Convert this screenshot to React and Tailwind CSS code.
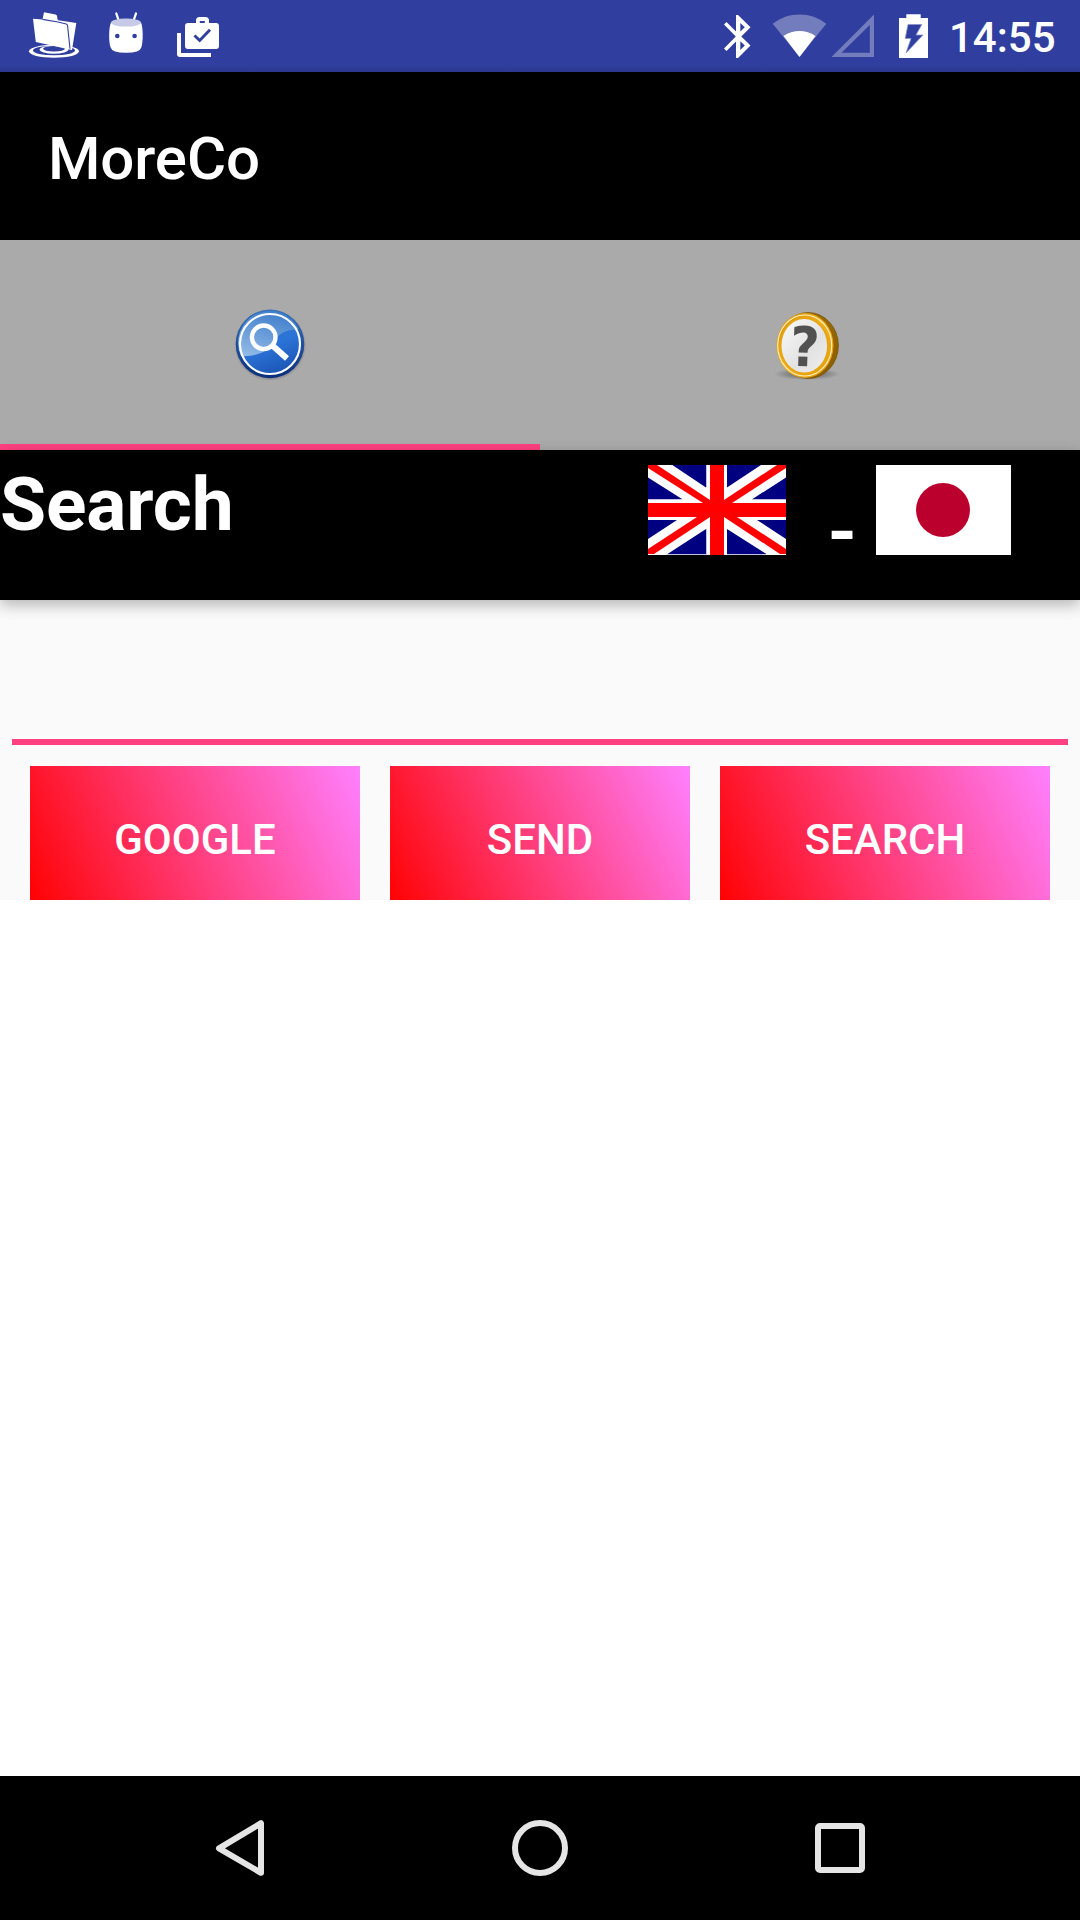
function NotificationIcons() {
  return (
    <svg className="h-[72px] w-[260px] shrink-0" viewBox="0 0 260 72" fill="#fff" aria-hidden="true">
      <ellipse cx="54" cy="51.3" rx="25" ry="6.5" />
      <ellipse cx="54" cy="50.5" rx="21" ry="4.8" fill="#303f9f" />
      <ellipse cx="54" cy="49.6" rx="14.5" ry="4.2" />
      <ellipse cx="54" cy="48.8" rx="11" ry="2.8" fill="#303f9f" />
      <path d="M33 18.8 L42.5 19.6 L44 12.2 L55.5 14.6 Q57.5 15.2 57.3 18.5 L58 20.2 L76.3 23 L72 50 L69.5 49.6 L35.8 42 Z" />
      <path d="M42.5 19.4 L58 22 L66.2 24 Q67.4 24.4 67.6 26 L70 48.8" fill="none" stroke="#303f9f" strokeWidth="1.1" />

      <path d="M116.3 13.5 L118.7 20.5 M136 13.5 L133.6 20.5" fill="none" stroke="#fff" strokeWidth="2.3" strokeLinecap="round" />
      <path d="M111 22.5 C108.7 27 108.6 42 110.5 47.2 Q112 52.7 126 52.7 Q140 52.7 141.4 47.2 C143.3 42 143.2 27 141 22.5 Z" />
      <ellipse cx="126" cy="22.6" rx="15" ry="4" fill="#c7cae6" />
      <circle cx="117.3" cy="36" r="2.3" fill="#303f9f" />
      <circle cx="134.6" cy="36" r="2.3" fill="#303f9f" />

      <path fillRule="evenodd" d="M188 23 H196 V20.5 Q196 17 199.5 17 H205.3 Q209 17 209 20.5 V23 H216 Q219 23 219 26 V46 Q219 49 216 49 H188 Q185 49 185 46 V26 Q185 23 188 23 Z M199.8 21 V23 H204.8 V21 Z" />
      <path d="M194.5 35.5 L199.7 40.5 L210 29.8" fill="none" stroke="#303f9f" strokeWidth="2.9" />
      <path d="M177 33 H181 V53 H211 V57 H180 Q177 57 177 54 Z" />
    </svg>
  );
}

function SystemIcons() {
  return (
    <svg className="h-[72px] w-[240px] shrink-0" viewBox="700 0 240 72" fill="#fff" aria-hidden="true">
      <path fillRule="evenodd" d="M736 15 H738 L750.5 27.200 L741.300 36.400 L750.500 45.600 L738 58 H736 V41.500 L726.500 51 L724 48.400 L735.800 36.400 L724 24.500 L726.500 22 L736 31.500 Z M740.300 23 V31.500 L744.800 27.200 Z M740.300 41.300 V50 L744.800 45.600 Z" />
      <path d="M799.5 57 L772.7 23.8 C788 11.3 811 11.3 826.3 23.8 Z" fill="#737cbd" />
      <path d="M799.5 57 L783.5 36 C793 29.3 806 29.3 815.5 36 Z" />
      <path fillRule="evenodd" d="M831.5 57 L874 14.5 V57 Z M841.5 52.7 H869.8 V25 Z" fill="#737cbd" />
      <path d="M899 18 H906.3 V14.3 H920.7 V18 H928 V58 H899 Z" />
      <path d="M908 24.5 H921.8 L916 35 H923 L906 53 L911 38.5 H905.2 Z" fill="#303f9f" stroke="#8b93ca" strokeWidth="0.8" />
    </svg>
  );
}

function StatusBar() {
  return (
    <header className="flex h-[72px] justify-between bg-linear-to-b from-[#303f9f] from-90% to-[#2b388e]">
      <NotificationIcons />
      <div className="flex">
        <SystemIcons />
        <span className="w-[140px] pt-[4px] pl-[9px] text-[42px] leading-[68px] font-medium text-white">14:55</span>
      </div>
    </header>
  );
}

function SearchIcon() {
  return (
    <svg className="h-[90px] w-[100px]" viewBox="0 0 100 90" aria-label="Search">
      <defs>
        <linearGradient id="discRim" x1="0" y1="0" x2="0" y2="1">
          <stop offset="0" stopColor="#3672bd" />
          <stop offset="1" stopColor="#0a2f7c" />
        </linearGradient>
        <linearGradient id="discFace" x1="0.2" y1="0" x2="0.6" y2="1">
          <stop offset="0" stopColor="#2f71c8" />
          <stop offset="0.55" stopColor="#2b74d6" />
          <stop offset="1" stopColor="#1c56b8" />
        </linearGradient>
        <linearGradient id="discShine" x1="0.6" y1="0" x2="0.2" y2="1">
          <stop offset="0" stopColor="#3f7ecb" />
          <stop offset="1" stopColor="#92b9e6" />
        </linearGradient>
        <radialGradient id="discShadow">
          <stop offset="0.85" stopColor="#444" stopOpacity="0.55" />
          <stop offset="1" stopColor="#444" stopOpacity="0" />
        </radialGradient>
      </defs>
      <circle cx="50.3" cy="45" r="36" fill="url(#discShadow)" />
      <circle cx="50" cy="43.9" r="34.3" fill="url(#discRim)" />
      <circle cx="50" cy="44" r="30" fill="url(#discFace)" />
      <path d="M21 56 C34 57 49 52 54 42 C58 33 68 29 79 29.5 A30 30 0 1 0 21 56 Z" fill="url(#discShine)" />
      <circle cx="50" cy="44" r="30" fill="none" stroke="#fff" strokeWidth="2.1" />
      <path d="M53 46 L67 58.5" stroke="#fff" strokeWidth="6" />
      <circle cx="43.7" cy="37.3" r="11.8" fill="none" stroke="#fff" strokeWidth="4.3" />
    </svg>
  );
}

function HelpIcon() {
  return (
    <svg className="h-[90px] w-[100px]" viewBox="0 0 100 90" aria-label="Help">
      <defs>
        <linearGradient id="coinEdge" x1="0" y1="0" x2="1" y2="1">
          <stop offset="0" stopColor="#a87307" />
          <stop offset="1" stopColor="#8a5c00" />
        </linearGradient>
        <linearGradient id="coinFace" x1="0" y1="0" x2="1" y2="1">
          <stop offset="0" stopColor="#d38f08" />
          <stop offset="0.45" stopColor="#eeb01c" />
          <stop offset="1" stopColor="#e39b0b" />
        </linearGradient>
        <radialGradient id="coinShadow">
          <stop offset="0.3" stopColor="#333" stopOpacity="0.5" />
          <stop offset="1" stopColor="#333" stopOpacity="0" />
        </radialGradient>
        <linearGradient id="coinPlate" x1="0" y1="0" x2="1" y2="1">
          <stop offset="0" stopColor="#fafafa" />
          <stop offset="0.6" stopColor="#e2e2e2" />
          <stop offset="1" stopColor="#f0f0f0" />
        </linearGradient>
      </defs>
      <ellipse cx="47" cy="74" rx="33" ry="6" fill="url(#coinShadow)" />
      <ellipse cx="48.2" cy="45.5" rx="30.2" ry="33" fill="url(#coinEdge)" stroke="#7b5408" strokeWidth="0.8" />
      <ellipse cx="45" cy="45.5" rx="28.5" ry="32.5" fill="url(#coinFace)" />
      <ellipse cx="44.7" cy="45.5" rx="27" ry="30.5" fill="none" stroke="#fff0bd" strokeWidth="1.1" />
      <ellipse cx="44.3" cy="45.7" rx="23.6" ry="27.6" fill="url(#coinPlate)" stroke="#e8a413" strokeWidth="1.6" />
      <text x="45" y="66.2" textAnchor="middle" fontFamily="'DejaVu Sans', sans-serif" fontWeight="700" fontSize="55" fill="#515151" transform="rotate(2 45 46)" textLength="29.5" lengthAdjust="spacingAndGlyphs">?</text>
    </svg>
  );
}

function Tabs() {
  return (
    <nav className="grid h-[210px] shrink-0 grid-cols-2 bg-[#aaaaaa]">
      <button className="flex flex-col items-center justify-between pt-[60px]">
        <SearchIcon />
        <span className="h-[6px] w-full bg-[#ff4081]" />
      </button>
      <button className="flex flex-col items-center pt-[60px]">
        <HelpIcon />
      </button>
    </nav>
  );
}

function FlagUK() {
  return (
    <svg className="h-[90px] w-[138px]" viewBox="0 0 138 90" aria-label="English">
      <path d="M0 0 H138 V90 H0 Z" fill="#fff" />
      <path
        fill="#000080"
        d="M24.3 0 H58 V22.5 Z M0 12.5 V34 H34 Z M79 0 H113 L79 22.5 Z M138 12.5 V34 H104.5 Z M0 55 H29 L0 74 Z M58 64 V89 H19.5 Z M109 55 H138 V74 Z M79 64 V89 H118.5 Z"
      />
      <path d="M58.5 0 V22 M58.5 64 V90 M0 34.5 H34 M104 34.5 H138 M19 89.5 H58 M79 89.5 H118" stroke="#c2c2e0" strokeWidth="1" />
      <g fill="#ff0000">
        <path d="M62 0 H76 V90 H62 Z" />
        <path d="M0 38 H138 V52 H0 Z" />
        <path d="M0 0 H9 L62 35 V42 L55 38 L0 3 Z" />
        <path d="M138 0 H129 L76 35 V42 L84 38 L138 3 Z" />
        <path d="M0 84 L49 52 H62 L6 89 H0 Z" />
        <path d="M138 84 L89 52 H76 L132 89 H138 Z" />
      </g>
    </svg>
  );
}

function FlagJapan() {
  return (
    <div className="flex h-[90px] w-[135px] items-center justify-center bg-white pr-px">
      <span className="size-[54px] rounded-full bg-[#bc002d]" />
    </div>
  );
}

function LanguageBar() {
  return (
    <section className="relative flex h-[150px] shrink-0 bg-black text-[75px] leading-[88px] font-bold text-white shadow-[0_5px_14px_rgba(0,0,0,0.28)]">
      <h2 className="w-[648px] pt-[10px] tracking-[-0.2px]">Search</h2>
      <div className="flex pt-[15px]">
        <FlagUK />
        <span className="w-[90px] pt-[23px] pl-[41.5px]">-</span>
        <FlagJapan />
      </div>
    </section>
  );
}

function Actions() {
  return (
    <div className="mt-[21px] flex h-[134px] gap-[30px] overflow-hidden px-[18px] text-[42px] leading-none font-medium text-white">
      <button className="h-[144px] w-[330px] bg-[linear-gradient(66.4deg,#ff0000,#ff4081,#ff80ff)] pt-[4px]">GOOGLE</button>
      <button className="h-[144px] w-[300px] bg-[linear-gradient(64.4deg,#ff0000,#ff4081,#ff80ff)] pt-[4px]">SEND</button>
      <button className="h-[144px] w-[330px] bg-[linear-gradient(66.4deg,#ff0000,#ff4081,#ff80ff)] pt-[4px]">SEARCH</button>
    </div>
  );
}

function NavigationBar() {
  return (
    <footer className="grid h-[144px] shrink-0 grid-cols-3 place-items-center bg-black px-[90px]">
      <svg className="size-[60px]" viewBox="210 1818 60 60" fill="none" stroke="#e5e5e5" strokeWidth="6" strokeLinejoin="round" aria-label="Back">
        <path d="M219 1848.3 L261 1823.2 V1872.8 Z" />
      </svg>
      <span className="size-14 rounded-full border-[6px] border-[#e5e5e5]" />
      <span className="size-[50px] rounded-[5px] border-[6px] border-[#e5e5e5]" />
    </footer>
  );
}

export default function App() {
  return (
    <div className="flex h-[1920px] w-[1080px] flex-col overflow-hidden bg-white font-['Roboto',sans-serif]">
      <StatusBar />
      <h1 className="h-[168px] bg-black pt-[52px] pl-12 text-[60px] leading-[70px] font-medium tracking-[-0.1px] text-white">MoreCo</h1>
      <Tabs />
      <LanguageBar />
      <main className="h-[300px] shrink-0 bg-[#fafafa] px-3 [box-shadow:none]">
        <input className="block h-[145px] w-full border-b-[6px] border-[#ff4081] bg-transparent text-[54px] outline-none" aria-label="Search text" />
        <Actions />
      </main>
      <div className="grow" />
      <NavigationBar />
    </div>
  );
}
